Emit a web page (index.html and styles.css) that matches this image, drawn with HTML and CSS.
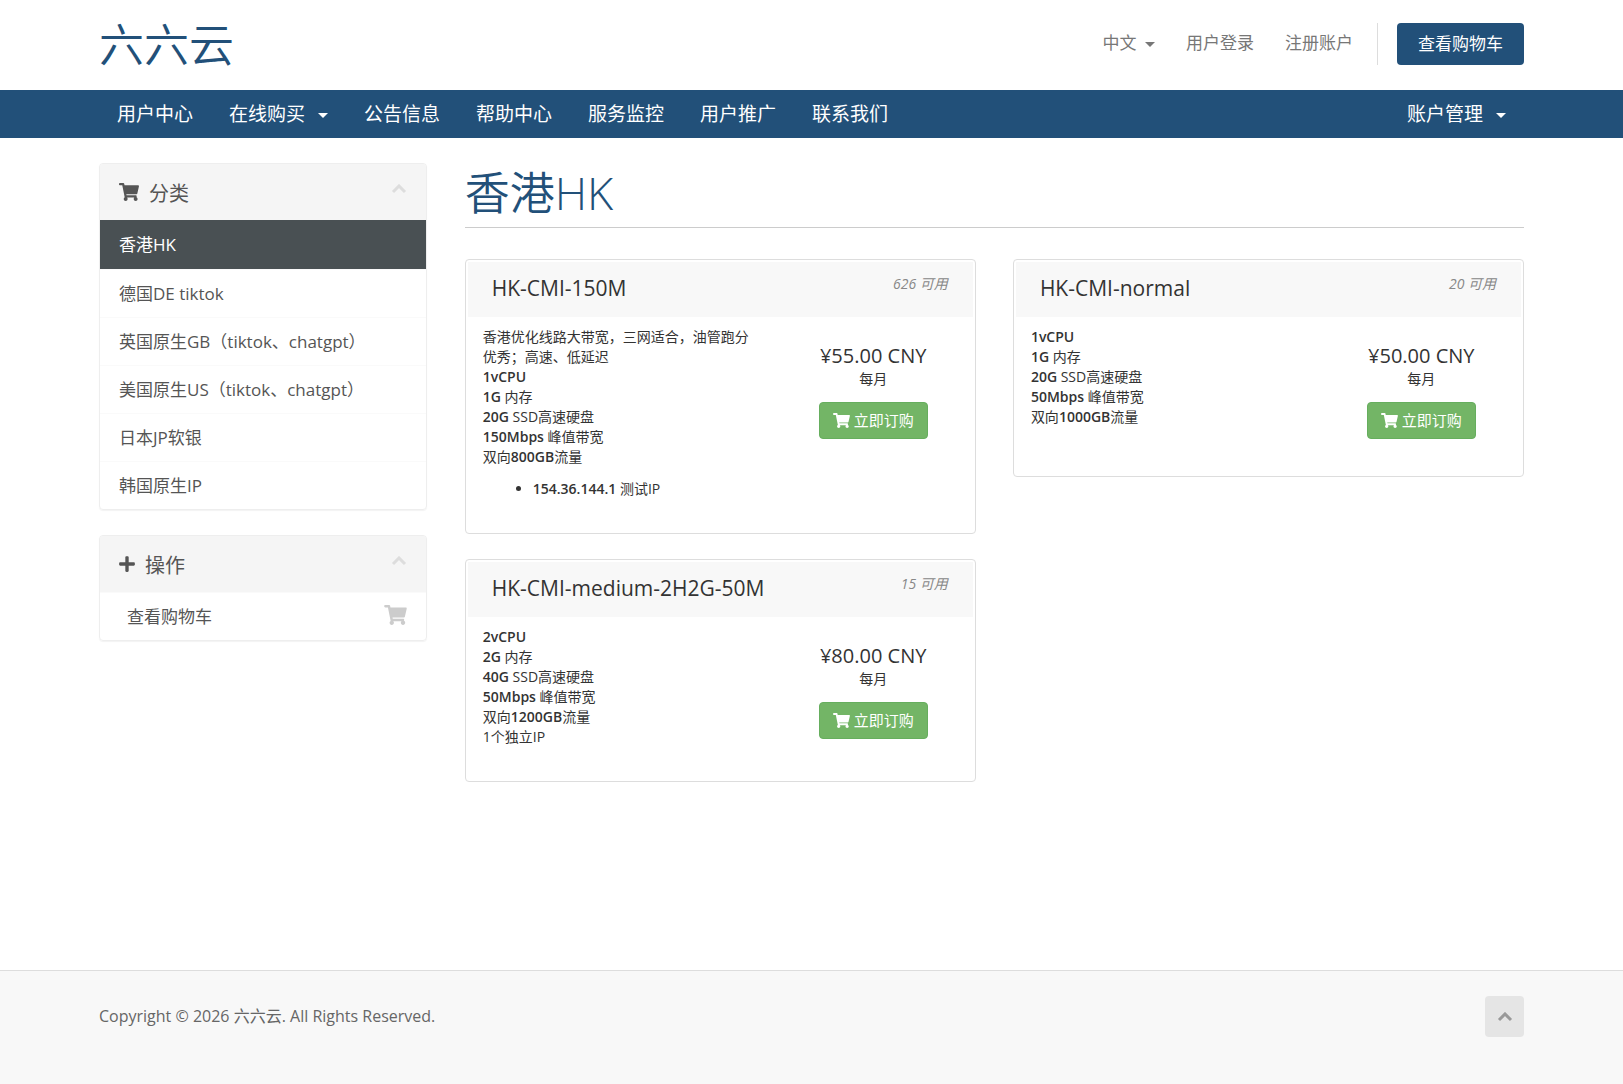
FILE: index.html
```html
<!DOCTYPE html>
<html lang="zh-CN">
  <head>
    <meta charset="UTF-8" />
    <meta name="viewport" content="width=device-width, initial-scale=1.0" />
    <title>香港HK - 六六云</title>
    <link rel="stylesheet" href="styles.css">
  </head>
  <body>
    <svg class="sprite" aria-hidden="true">
      <symbol id="icon-cart" viewBox="0 0 576 512">
        <path d="M528 301l47-208c4-15-8-29-23-29H159l-9-45C148 8 138 0 126 0H24C11 0 0 11 0 24v16c0 13 11 24 24 24h70l70 343c-17 10-28 28-28 49 0 31 25 56 56 56s56-25 56-56c0-16-6-30-17-40h210c-11 10-17 24-17 40 0 31 25 56 56 56s56-25 56-56c0-22-13-41-32-50l6-25c3-15-8-29-24-29H218l-7-32h294c11 0 20-8 23-19z" />
      </symbol>
      <symbol id="icon-plus" viewBox="0 0 448 512">
        <path d="M416 208H272V64c0-18-14-32-32-32h-32c-18 0-32 14-32 32v144H32c-18 0-32 14-32 32v32c0 18 14 32 32 32h144v144c0 18 14 32 32 32h32c18 0 32-14 32-32V304h144c18 0 32-14 32-32v-32c0-18-14-32-32-32z" />
      </symbol>
      <symbol id="icon-up" viewBox="0 0 16 10">
        <path d="M2 8l6-6 6 6" fill="none" stroke="currentColor" stroke-width="3" />
      </symbol>
    </svg>

    <header class="header">
      <div class="container header-inner">
        <a class="logo" href="#">六六云</a>
        <ul class="top-nav">
          <li><a href="#">中文 <span class="caret"></span></a></li>
          <li><a href="#">用户登录</a></li>
          <li><a href="#">注册账户</a></li>
          <li class="primary-action"><a class="btn-cart" href="#">查看购物车</a></li>
        </ul>
      </div>
    </header>

    <nav class="main-menu">
      <div class="container menu-inner">
        <ul>
          <li><a href="#">用户中心</a></li>
          <li><a href="#">在线购买 <span class="caret"></span></a></li>
          <li><a href="#">公告信息</a></li>
          <li><a href="#">帮助中心</a></li>
          <li><a href="#">服务监控</a></li>
          <li><a href="#">用户推广</a></li>
          <li><a href="#">联系我们</a></li>
        </ul>
        <ul>
          <li><a href="#">账户管理 <span class="caret"></span></a></li>
        </ul>
      </div>
    </nav>

    <div class="container content">
      <aside class="sidebar">
        <section class="panel">
          <h3 class="panel-heading">
            <svg class="icon-heading-cart"><use href="#icon-cart" /></svg>
            <span>分类</span>
            <button class="panel-minimise" type="button" aria-label="收起分类"><svg><use href="#icon-up" /></svg></button>
          </h3>
          <div class="list-group">
            <a class="active" href="#">香港HK</a>
            <a href="#">德国DE tiktok</a>
            <a href="#">英国原生GB（tiktok、chatgpt）</a>
            <a href="#">美国原生US（tiktok、chatgpt）</a>
            <a href="#">日本JP软银</a>
            <a href="#">韩国原生IP</a>
          </div>
        </section>
        <section class="panel">
          <h3 class="panel-heading">
            <svg class="icon-heading-plus"><use href="#icon-plus" /></svg>
            <span>操作</span>
            <button class="panel-minimise" type="button" aria-label="收起操作"><svg><use href="#icon-up" /></svg></button>
          </h3>
          <div class="list-group actions">
            <a href="#">查看购物车 <svg><use href="#icon-cart" /></svg></a>
          </div>
        </section>
      </aside>

      <main class="main-content">
        <h1>香港HK</h1>
        <div class="products">
          <article class="product">
            <header>
              <h2>HK-CMI-150M</h2>
              <span class="qty">626 可用</span>
            </header>
            <div class="product-body">
              <div class="product-desc">
                香港优化线路大带宽，三网适合，油管跑分优秀；高速、低延迟<br>
                <b>1vCPU</b><br>
                <b>1G</b> 内存<br>
                <b>20G</b> SSD高速硬盘<br>
                <b>150Mbps</b> 峰值带宽<br>
                双向<b>800GB</b>流量
                <ul>
                  <li><b>154.36.144.1</b> 测试IP</li>
                </ul>
              </div>
              <div class="product-order">
                <span class="price">¥55.00 CNY</span>
                <span>每月</span>
                <a class="btn-order" href="#"><svg><use href="#icon-cart" /></svg>立即订购</a>
              </div>
            </div>
          </article>

          <article class="product">
            <header>
              <h2>HK-CMI-normal</h2>
              <span class="qty">20 可用</span>
            </header>
            <div class="product-body">
              <div class="product-desc">
                <b>1vCPU</b><br>
                <b>1G</b> 内存<br>
                <b>20G</b> SSD高速硬盘<br>
                <b>50Mbps</b> 峰值带宽<br>
                双向<b>1000GB</b>流量
              </div>
              <div class="product-order">
                <span class="price">¥50.00 CNY</span>
                <span>每月</span>
                <a class="btn-order" href="#"><svg><use href="#icon-cart" /></svg>立即订购</a>
              </div>
            </div>
          </article>

          <article class="product">
            <header>
              <h2>HK-CMI-medium-2H2G-50M</h2>
              <span class="qty">15 可用</span>
            </header>
            <div class="product-body">
              <div class="product-desc">
                <b>2vCPU</b><br>
                <b>2G</b> 内存<br>
                <b>40G</b> SSD高速硬盘<br>
                <b>50Mbps</b> 峰值带宽<br>
                双向<b>1200GB</b>流量<br>
                1个独立IP
              </div>
              <div class="product-order">
                <span class="price">¥80.00 CNY</span>
                <span>每月</span>
                <a class="btn-order" href="#"><svg><use href="#icon-cart" /></svg>立即订购</a>
              </div>
            </div>
          </article>
        </div>
      </main>
    </div>

    <footer class="footer">
      <div class="container footer-inner">
        <p>Copyright © 2026 六六云. All Rights Reserved.</p>
        <a class="back-to-top" href="#" aria-label="返回顶部"><svg><use href="#icon-up" /></svg></a>
      </div>
    </footer>
  </body>
</html>
```

FILE: styles.css
```css
* {
  box-sizing: border-box;
}
body {
  display: flex;
  flex-direction: column;
  min-height: 100vh;
  margin: 0;
  background: #fff;
  color: #333;
  font-family: "Open Sans", "Noto Sans CJK SC", sans-serif;
  font-size: 16px;
}
a {
  color: inherit;
  text-decoration: none;
}
ul {
  margin: 0;
  padding: 0;
  list-style: none;
}
svg {
  fill: currentColor;
}
.sprite {
  display: none;
}
.container {
  width: calc(100% - 40px);
  max-width: 1425px;
  margin: 0 auto;
}
.caret {
  display: inline-block;
  border-top: 5px solid;
  border-left: 5px solid transparent;
  border-right: 5px solid transparent;
  vertical-align: middle;
}

/* header */
.header-inner {
  display: flex;
  justify-content: space-between;
  align-items: center;
  height: 90px;
}
.logo {
  color: #225079;
  font-size: 45px;
  font-weight: 350;
  line-height: 60px;
}
.top-nav {
  display: flex;
  align-items: flex-start;
  gap: 31px;
  padding-bottom: 2px;
  color: #777;
  font-size: 17px;
  line-height: 40px;
}
.top-nav .caret {
  margin-left: 4px;
}
.primary-action {
  margin-left: -7px;
  padding-left: 19px;
  border-left: 1px solid #ddd;
}
.btn-cart {
  display: block;
  padding: 1px 21px;
  border-radius: 4px;
  background: #225079;
  color: #fff;
}

/* main menu */
.main-menu {
  background: #225079;
  color: #fff;
  font-size: 19px;
  line-height: 48px;
}
.menu-inner,
.main-menu ul {
  display: flex;
}
.menu-inner {
  justify-content: space-between;
}
.main-menu a {
  display: block;
  padding: 0 18px;
}
.main-menu .caret {
  margin-left: 8px;
}

.content {
  display: flex;
  flex: 1;
  gap: 38px;
  padding: 25px 0;
}

/* sidebar */
.sidebar {
  flex: 0 0 23%;
}
.panel {
  margin-bottom: 25px;
  border: 1px solid #eee;
  border-radius: 4px;
  box-shadow: 0 1px 1px rgba(0, 0, 0, 0.05);
  overflow: hidden;
  color: #555;
}
.panel-heading {
  display: flex;
  align-items: center;
  gap: 10px;
  height: 56px;
  margin: 0;
  padding: 0 19px;
  background: #f5f5f5;
  font-size: 20px;
  font-weight: 400;
}
.icon-heading-cart {
  width: 20px;
  height: 18px;
}
.icon-heading-plus {
  width: 16px;
  height: 18px;
}
.panel-minimise {
  margin-left: auto;
  padding: 0 0 6px;
  border: 0;
  background: none;
  color: #ddd;
  line-height: 0;
  cursor: pointer;
}
.panel-minimise svg {
  width: 16px;
  height: 10px;
}
.list-group a {
  display: flex;
  justify-content: space-between;
  align-items: center;
  min-height: 48px;
  padding: 0 19px 3px;
  border-top: 1px solid #fafafa;
  font-size: 17px;
}
.list-group .active {
  min-height: 49px;
  border-color: #495053;
  background: #495053;
  color: #fff;
}
.actions a {
  padding-left: 27px;
}
.actions svg {
  width: 23px;
  height: 20px;
  color: #ccc;
}

/* products */
.main-content {
  flex: 1;
}
h1 {
  margin: 0 0 31px;
  padding-bottom: 4px;
  border-bottom: 1px solid #ccc;
  color: #225079;
  font-size: 45px;
  font-weight: 350;
  line-height: 60px;
}
.products {
  display: grid;
  grid-template-columns: 1fr 1fr;
  align-items: start;
  gap: 25px 37px;
}
.product {
  padding: 2px;
  border: 1px solid #ddd;
  border-radius: 4px;
}
.product header {
  display: flex;
  justify-content: space-between;
  padding: 10px 25px 15px 24px;
  background: #f8f8f8;
}
.product h2 {
  margin: 0;
  padding-top: 2px;
  font-size: 21px;
  font-weight: 400;
  line-height: 28px;
}
.qty {
  color: #888;
  font-size: 14px;
  font-style: italic;
  line-height: 24px;
}
.product-body {
  display: flex;
  padding: 10px 14px 32px 15px;
  font-size: 14px;
  line-height: 20px;
}
.product-desc {
  flex: 0 0 64%;
  padding-right: 30px;
}
.product-desc b {
  font-weight: 600;
}
.product-desc ul {
  margin-top: 12px;
  padding-left: 50px;
  list-style: disc;
}
.product-order {
  display: flex;
  flex: 1;
  flex-direction: column;
  align-items: center;
  padding: 16px 0 3px;
}
.price {
  font-size: 20px;
  line-height: 26px;
}
.btn-order {
  display: flex;
  align-items: center;
  gap: 4px;
  margin-top: 13px;
  padding: 0 13px;
  border: 1px solid #66ae5e;
  border-radius: 4px;
  background: #73b566;
  color: #fff;
  font-size: 15px;
  line-height: 35px;
}
.btn-order svg {
  width: 17px;
  height: 15px;
}

/* footer */
.footer {
  padding: 25px 0 47px;
  border-top: 1px solid #ddd;
  background: #f8f8f8;
  color: #666;
}
.footer-inner {
  display: flex;
  justify-content: space-between;
  align-items: center;
}
.footer p {
  margin: 0;
  padding-bottom: 3px;
}
.back-to-top {
  display: flex;
  justify-content: center;
  align-items: center;
  width: 39px;
  height: 41px;
  border-radius: 4px;
  background: #e5e5e5;
  color: #999;
}
.back-to-top svg {
  width: 16px;
  height: 10px;
}
```
